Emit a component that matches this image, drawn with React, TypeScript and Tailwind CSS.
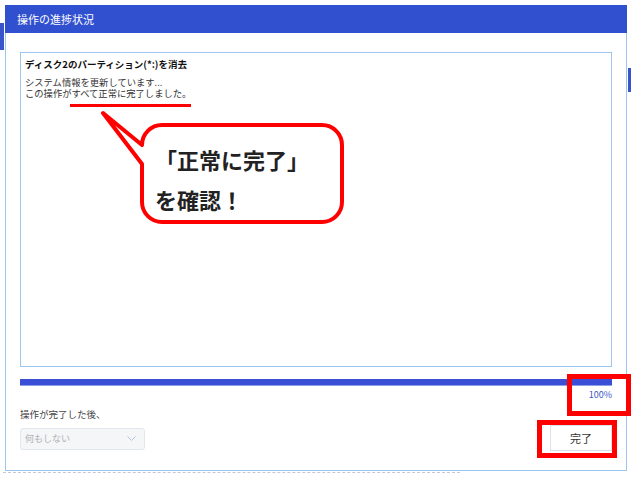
import React from 'react';

const jp = { fontFamily: '"Noto Sans CJK JP", "Noto Sans", sans-serif' };

const Callout: React.FC = () => (
  <div className="absolute left-[98px] top-[108px] w-[250px] h-[120px]">
    <svg width="250" height="120" viewBox="0 0 250 120" className="absolute inset-0">
      <path
        d="M 64 17 H 224 A 20 20 0 0 1 244 37 V 94 A 20 20 0 0 1 224 114 H 64 A 20 20 0 0 1 44 94 V 56 L 5 5 L 44 37 A 20 20 0 0 1 64 17 Z"
        fill="#ffffff"
        stroke="#ff0000"
        strokeWidth="4"
        strokeLinejoin="round"
      />
    </svg>
    <div className="absolute left-[57px] top-[31px] text-[22px] font-bold leading-[40px] text-[#222]" style={jp}>
      <div>「正常に完了」</div>
      <div>を確認！</div>
    </div>
  </div>
);

export default function App() {
  return (
    <div className="relative w-[640px] h-[485px] bg-white overflow-hidden" style={jp}>
      <div className="flex">
        {/* background window, left edge */}
        <div className="w-[5px] pt-[23px]">
          <div className="h-[27px] w-[4px] bg-[#3a55cc]" />
        </div>

        <div className="w-[622px] pt-[5px]">
          {/* dialog */}
          <div className="h-[28px] bg-[#3050d0] flex items-center pl-[12px] text-[11px] text-white">
            操作の進捗状況
          </div>
          <div className="h-[438px] border-x border-b border-[#9cc6ee] pt-[19px] px-[14px] flex flex-col">
            <div className="h-[315px] border border-[#9cc6ee] pl-[4px] pt-[4px] text-[9.3px] leading-[11px] text-[#333]">
              <div className="font-bold text-[9.5px] text-[#111] leading-[14px]">ディスク2のパーティション(*:)を消去</div>
              <div className="mt-[6px]">システム情報を更新しています...</div>
              <div>この操作がすべて正常に完了しました。</div>
            </div>

            <div className="mt-[12px] h-[7px] bg-[#3b4fd6] border-b border-[#8fa0ea]" />
            <div className="text-right text-[9px] leading-[12px] text-[#3a56c8] pt-[3px] pr-[0px]">100%</div>

            <div className="mt-[7px] text-[9.5px] leading-[12px] text-[#444]">操作が完了した後、</div>

            <div className="flex items-start justify-between">
              <div className="mt-[8px] w-[125px] h-[22px] rounded-[3px] border border-[#e2e6ee] bg-[#f5f6f8] flex items-center justify-between px-[4px] text-[9px] text-[#b0b0b0]">
                <span>何もしない</span>
                <svg width="9" height="6" viewBox="0 0 9 6" className="mr-[4px]">
                  <path d="M0.5 0.5 L4.5 4.5 L8.5 0.5" fill="none" stroke="#b8c4d8" strokeWidth="1" />
                </svg>
              </div>
              <button className="mt-[5px] w-[62px] h-[26px] border border-[#dde2ea] bg-white text-[11px] text-[#333] flex items-center justify-center">
                完了
              </button>
            </div>
          </div>
          <div className="mt-[1px] -ml-[2px] w-[457px] border-t border-dashed border-[#c4c8d0]" />
        </div>

        {/* background window, right edge */}
        <div className="w-[13px] pt-[68px] pl-[1px]">
          <div className="h-[24px] w-[3px] bg-[#3a55cc]" />
        </div>
      </div>

      {/* annotations */}
      <div className="absolute left-[70px] top-[104px] w-[121px] h-[3px] bg-[#ff0000]" />
      <Callout />
      <div className="absolute left-[567px] top-[374px] w-[64px] h-[42px] border-[5px] border-[#ff0000]" />
      <div className="absolute left-[537px] top-[420px] w-[80px] h-[38px] border-[5px] border-[#ff0000]" />
    </div>
  );
}
